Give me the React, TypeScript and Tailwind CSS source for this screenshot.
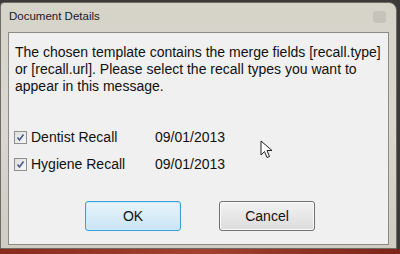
export default function App() {
  return (
    <div className="w-[400px] h-[254px] overflow-hidden bg-[#3b3a38] flex flex-col" style={{ fontFamily: '"Liberation Sans", Arial, sans-serif' }}>
      <div className="mt-[2px] mr-[3px] flex-1 flex flex-col rounded-tr-[8px] rounded-tl-[4px] border border-[#6e6c66] bg-gradient-to-b from-[#d6d3c9] via-[#d9d7ce] to-[#cfccc2] px-[7px] pb-[3px]">
        <div className="h-[29px] flex items-center justify-between pl-[1px] pb-[2px]">
          <span className="text-[11.5px] text-[#1a1a1a]">Document Details</span>
          <div className="w-[13px] h-[12px] mr-[3px] rounded-[3px] bg-[#c6c3ba]" />
        </div>
        <div className="flex-1 border border-[#8d8b85] bg-[#f0f0f0] flex flex-col">
          <p className="px-[6px] pt-[11px] text-[14px] leading-[17px] text-[#111] whitespace-nowrap">
            The chosen template contains the merge fields [recall.type]
            <br />
            or [recall.url]. Please select the recall types you want to
            <br />
            appear in this message.
          </p>
          <div className="relative mt-[36px] flex flex-col gap-[14px] pl-[5px]">
            {[
              ['Dentist Recall', '09/01/2013'],
              ['Hygiene Recall', '09/01/2013'],
            ].map(([label, date]) => (
              <div key={label} className="flex items-center h-[13px] text-[14px] text-[#111]">
                <div className="w-[13px] h-[13px] border border-[#8e8f8f] bg-gradient-to-br from-[#dedede] to-[#f8f8f8] flex items-center justify-center">
                  <svg width="9" height="9" viewBox="0 0 9 9">
                    <path d="M1.5 4.5 L3.5 7 L7.5 1.5" fill="none" stroke="#4a5a8a" strokeWidth="1.6" />
                  </svg>
                </div>
                <span className="ml-[4px] w-[124px]">{label}</span>
                <span>{date}</span>
              </div>
            ))}
            <svg className="absolute left-[251px] top-[9px]" width="14" height="20" viewBox="0 0 14 20">
              <path d="M1 1 L1 15 L4.5 11.5 L7 17.5 L9.5 16.5 L7 10.5 L12 10.5 Z" fill="#fff" stroke="#222" strokeWidth="1" />
            </svg>
          </div>
          <div className="mt-auto mb-[13px] flex pl-[76px] gap-[38px]">
            <button className="w-[96px] h-[30px] rounded-[3px] border border-[#3c9fd9] bg-gradient-to-b from-[#e8f4fb] to-[#c9e4f5] text-[14px] text-[#111] shadow-[inset_0_0_0_1px_#c8eafd]">
              OK
            </button>
            <button className="w-[96px] h-[30px] rounded-[3px] border border-[#707070] bg-gradient-to-b from-[#f2f2f2] to-[#dcdcdc] text-[14px] text-[#111] shadow-[inset_0_0_0_1px_#fcfcfc]">
              Cancel
            </button>
          </div>
        </div>
      </div>
      <div className="h-[5px] bg-gradient-to-r from-[#8a2a1c] via-[#a4412e] to-[#7c2418]" />
    </div>
  );
}
